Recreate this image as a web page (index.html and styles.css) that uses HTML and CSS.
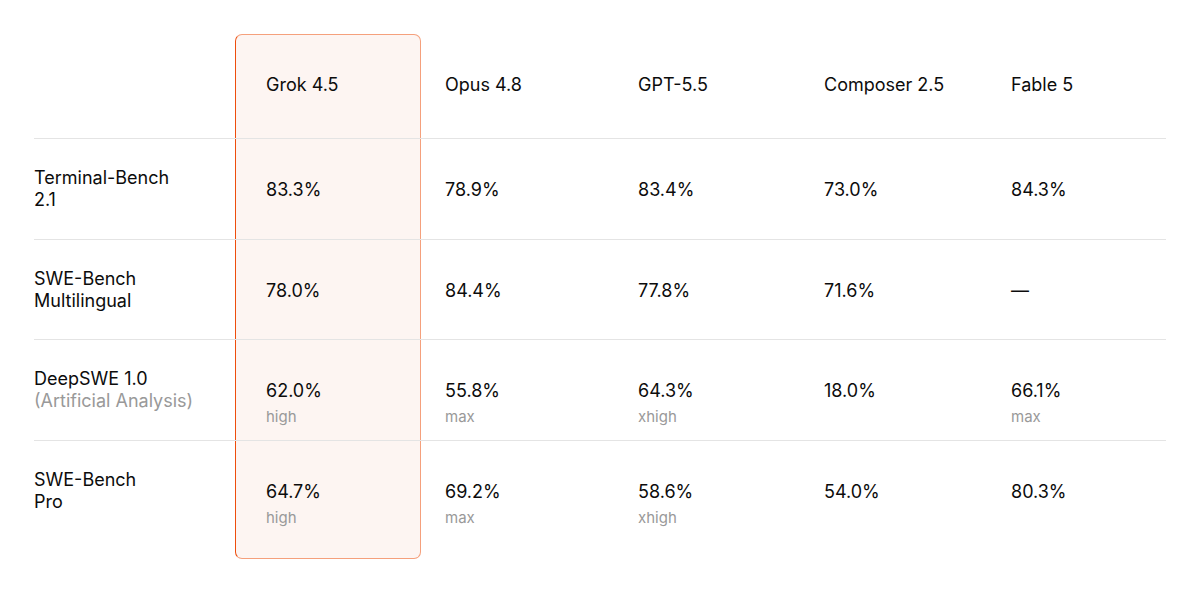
FILE: index.html
```html
<!DOCTYPE html>
<html lang="en">
<head>
<meta charset="utf-8">
<title>Benchmarks</title>
<link rel="stylesheet" href="styles.css">
</head>
<body>
<div class="bench">
  <div class="highlight"></div>
  <div class="row head">
    <div class="cell label"></div>
    <div class="cell grok">Grok 4.5</div>
    <div class="cell">Opus 4.8</div>
    <div class="cell">GPT-5.5</div>
    <div class="cell">Composer 2.5</div>
    <div class="cell">Fable 5</div>
  </div>
  <div class="row">
    <div class="cell label">Terminal-Bench<br>2.1</div>
    <div class="cell grok">83.3%</div>
    <div class="cell">78.9%</div>
    <div class="cell">83.4%</div>
    <div class="cell">73.0%</div>
    <div class="cell">84.3%</div>
  </div>
  <div class="row">
    <div class="cell label">SWE-Bench<br>Multilingual</div>
    <div class="cell grok">78.0%</div>
    <div class="cell">84.4%</div>
    <div class="cell">77.8%</div>
    <div class="cell">71.6%</div>
    <div class="cell">—</div>
  </div>
  <div class="row">
    <div class="cell label">DeepSWE 1.0<br><span class="muted">(Artificial Analysis)</span></div>
    <div class="cell grok">62.0%<span class="sub">high</span></div>
    <div class="cell">55.8%<span class="sub">max</span></div>
    <div class="cell">64.3%<span class="sub">xhigh</span></div>
    <div class="cell">18.0%</div>
    <div class="cell">66.1%<span class="sub">max</span></div>
  </div>
  <div class="row last">
    <div class="cell label">SWE-Bench<br>Pro</div>
    <div class="cell grok">64.7%<span class="sub">high</span></div>
    <div class="cell">69.2%<span class="sub">max</span></div>
    <div class="cell">58.6%<span class="sub">xhigh</span></div>
    <div class="cell">54.0%</div>
    <div class="cell">80.3%</div>
  </div>
</div>
</body>
</html>
```
FILE: styles.css
```css
* { box-sizing: border-box; }
html, body { margin: 0; background: #ffffff; }
body {
  font-family: Inter, "Liberation Sans", sans-serif;
  color: #0c0c0c;
  font-size: 18px;
  line-height: 22px;
}
.bench {
  position: relative;
  width: 1132px;
  margin: 34px 0 0 34px;
}
.highlight {
  position: absolute;
  left: 201px;
  top: 0;
  width: 186px;
  height: 525px;
  background: #fdf5f2;
  border: 1px solid #f5a07c;
  border-left: 1px solid #ee4d0c;
  border-radius: 7px;
  z-index: 0;
}
.row {
  position: relative;
  z-index: 1;
  display: grid;
  grid-template-columns: 201px 186px 193px 186px 187px 179px;
  height: 100.67px;
  border-bottom: 1px solid #e4e4e4;
}
.row.head { height: 105px; }
.row.last { height: 119px; border-bottom: none; }
.cell {
  padding: 40px 0 0 24px;
  display: flex;
  flex-direction: column;
  align-items: flex-start;
}
.cell.label { padding: 28px 0 0 0; display: block; }
.cell.grok { padding-left: 31px; }
.head .cell { padding-top: 40px; }
.muted { color: #999999; }
.sub {
  margin-top: 4px;
  font-size: 15px;
  color: #999999;
}
```
